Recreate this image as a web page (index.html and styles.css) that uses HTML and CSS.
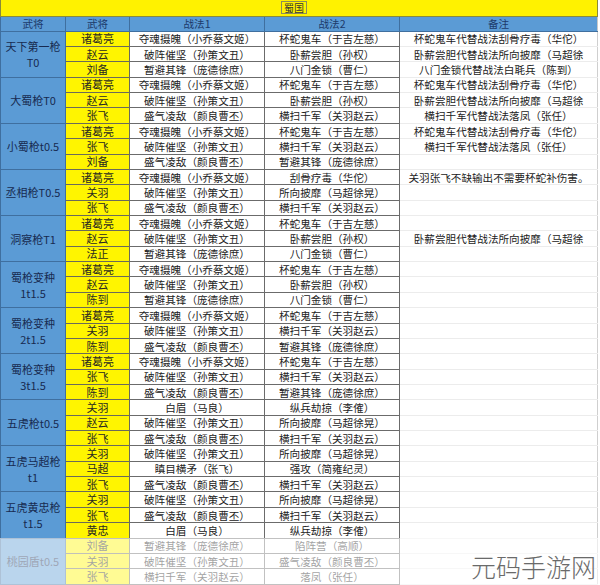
FILE: index.html
```html
<!DOCTYPE html>
<html lang="zh">
<head>
<meta charset="utf-8">
<title>蜀国</title>
<link rel="stylesheet" href="styles.css">
</head>
<body>
<div class="sheet">
<table class="grid">
<colgroup><col class="c1"><col class="c2"><col class="c3"><col class="c4"><col class="c5"></colgroup>
<tr class="title"><td colspan="5"><span class="title-box">蜀国</span></td></tr>
<tr class="head"><td>武将</td><td>武将</td><td>战法1</td><td>战法2</td><td>备注</td></tr>

<tr><td class="grp" rowspan="3">天下第一枪<br>T0</td><td class="hero">诸葛亮</td><td>夺魂摄魄（小乔蔡文姬）</td><td>杯蛇鬼车（于吉左慈）</td><td class="note">杯蛇鬼车代替战法刮骨疗毒（华佗）</td></tr>
<tr><td class="hero">赵云</td><td>破阵催坚（孙策文丑）</td><td>卧薪尝胆（孙权）</td><td class="note">卧薪尝胆代替战法所向披靡（马超徐</td></tr>
<tr><td class="hero">刘备</td><td>暂避其锋（庞德徐庶）</td><td>八门金锁（曹仁）</td><td class="note">八门金锁代替战法白毦兵（陈到）</td></tr>

<tr><td class="grp" rowspan="3">大蜀枪T0</td><td class="hero">诸葛亮</td><td>夺魂摄魄（小乔蔡文姬）</td><td>杯蛇鬼车（于吉左慈）</td><td class="note">杯蛇鬼车代替战法刮骨疗毒（华佗）</td></tr>
<tr><td class="hero">赵云</td><td>破阵催坚（孙策文丑）</td><td>卧薪尝胆（孙权）</td><td class="note">卧薪尝胆代替战法所向披靡（马超徐</td></tr>
<tr><td class="hero">张飞</td><td>盛气凌敌（颜良曹丕）</td><td>横扫千军（关羽赵云）</td><td class="note">横扫千军代替战法落凤（张任）</td></tr>

<tr><td class="grp" rowspan="3">小蜀枪t0.5</td><td class="hero">诸葛亮</td><td>夺魂摄魄（小乔蔡文姬）</td><td>杯蛇鬼车（于吉左慈）</td><td class="note">杯蛇鬼车代替战法刮骨疗毒（华佗）</td></tr>
<tr><td class="hero">张飞</td><td>破阵催坚（孙策文丑）</td><td>横扫千军（关羽赵云）</td><td class="note">横扫千军代替战法落凤（张任）</td></tr>
<tr><td class="hero">刘备</td><td>盛气凌敌（颜良曹丕）</td><td>暂避其锋（庞德徐庶）</td><td class="note"></td></tr>

<tr><td class="grp" rowspan="3">丞相枪T0.5</td><td class="hero">诸葛亮</td><td>夺魂摄魄（小乔蔡文姬）</td><td>刮骨疗毒（华佗）</td><td class="note">关羽张飞不缺输出不需要杯蛇补伤害。</td></tr>
<tr><td class="hero">关羽</td><td>破阵催坚（孙策文丑）</td><td>所向披靡（马超徐晃）</td><td class="note"></td></tr>
<tr><td class="hero">张飞</td><td>盛气凌敌（颜良曹丕）</td><td>横扫千军（关羽赵云）</td><td class="note"></td></tr>

<tr><td class="grp" rowspan="3">洞察枪T1</td><td class="hero">诸葛亮</td><td>夺魂摄魄（小乔蔡文姬）</td><td>杯蛇鬼车（于吉左慈）</td><td class="note"></td></tr>
<tr><td class="hero">赵云</td><td>破阵催坚（孙策文丑）</td><td>卧薪尝胆（孙权）</td><td class="note">卧薪尝胆代替战法所向披靡（马超徐</td></tr>
<tr><td class="hero">法正</td><td>暂避其锋（庞德徐庶）</td><td>八门金锁（曹仁）</td><td class="note"></td></tr>

<tr><td class="grp" rowspan="3">蜀枪变种<br>1t1.5</td><td class="hero">诸葛亮</td><td>夺魂摄魄（小乔蔡文姬）</td><td>杯蛇鬼车（于吉左慈）</td><td class="note"></td></tr>
<tr><td class="hero">赵云</td><td>破阵催坚（孙策文丑）</td><td>卧薪尝胆（孙权）</td><td class="note"></td></tr>
<tr><td class="hero">陈到</td><td>暂避其锋（庞德徐庶）</td><td>八门金锁（曹仁）</td><td class="note"></td></tr>

<tr><td class="grp" rowspan="3">蜀枪变种<br>2t1.5</td><td class="hero">诸葛亮</td><td>夺魂摄魄（小乔蔡文姬）</td><td>杯蛇鬼车（于吉左慈）</td><td class="note"></td></tr>
<tr><td class="hero">关羽</td><td>破阵催坚（孙策文丑）</td><td>横扫千军（关羽赵云）</td><td class="note"></td></tr>
<tr><td class="hero">陈到</td><td>盛气凌敌（颜良曹丕）</td><td>暂避其锋（庞德徐庶）</td><td class="note"></td></tr>

<tr><td class="grp" rowspan="3">蜀枪变种<br>3t1.5</td><td class="hero">诸葛亮</td><td>夺魂摄魄（小乔蔡文姬）</td><td>杯蛇鬼车（于吉左慈）</td><td class="note"></td></tr>
<tr><td class="hero">张飞</td><td>破阵催坚（孙策文丑）</td><td>横扫千军（关羽赵云）</td><td class="note"></td></tr>
<tr><td class="hero">陈到</td><td>盛气凌敌（颜良曹丕）</td><td>暂避其锋（庞德徐庶）</td><td class="note"></td></tr>

<tr><td class="grp" rowspan="3">五虎枪t0.5</td><td class="hero">关羽</td><td>白眉（马良）</td><td>纵兵劫掠（李傕）</td><td class="note"></td></tr>
<tr><td class="hero">赵云</td><td>破阵催坚（孙策文丑）</td><td>所向披靡（马超徐晃）</td><td class="note"></td></tr>
<tr><td class="hero">张飞</td><td>盛气凌敌（颜良曹丕）</td><td>横扫千军（关羽赵云）</td><td class="note"></td></tr>

<tr><td class="grp" rowspan="3">五虎马超枪<br>t1</td><td class="hero">关羽</td><td>破阵催坚（孙策文丑）</td><td>所向披靡（马超徐晃）</td><td class="note"></td></tr>
<tr><td class="hero">马超</td><td>瞋目横矛（张飞）</td><td>强攻（简雍纪灵）</td><td class="note"></td></tr>
<tr><td class="hero">张飞</td><td>盛气凌敌（颜良曹丕）</td><td>横扫千军（关羽赵云）</td><td class="note"></td></tr>

<tr><td class="grp" rowspan="3">五虎黄忠枪<br>t1.5</td><td class="hero">关羽</td><td>破阵催坚（孙策文丑）</td><td>所向披靡（马超徐晃）</td><td class="note"></td></tr>
<tr><td class="hero">张飞</td><td>盛气凌敌（颜良曹丕）</td><td>横扫千军（关羽赵云）</td><td class="note"></td></tr>
<tr><td class="hero">黄忠</td><td>白眉（马良）</td><td>纵兵劫掠（李傕）</td><td class="note"></td></tr>

<tr><td class="grp" rowspan="3">桃园盾t0.5</td><td class="hero">刘备</td><td>暂避其锋（庞德徐庶）</td><td>陷阵营（高顺）</td><td class="note"></td></tr>
<tr><td class="hero">关羽</td><td>破阵催坚（孙策文丑）</td><td>盛气凌敌（颜良曹丕）</td><td class="note"></td></tr>
<tr><td class="hero">张飞</td><td>横扫千军（关羽赵云）</td><td>落凤（张任）</td><td class="note"></td></tr>
</table>
<div class="fade"></div>
<div class="watermark">元码手游网</div>
</div>
</body>
</html>
```

FILE: styles.css
```css
html, body {
  margin: 0;
  padding: 0;
  background: #ffffff;
}
.sheet {
  position: relative;
  width: 600px;
  height: 585px;
  overflow: hidden;
  font-family: "Noto Sans CJK SC", "Noto Sans", sans-serif;
}
.grid {
  border-collapse: collapse;
  table-layout: fixed;
  width: 597px;
}
.c1 { width: 65px; }
.c2 { width: 64px; }
.c3 { width: 135px; }
.c4 { width: 135px; }
.c5 { width: 198px; }
.grid td {
  padding: 0;
  height: 14.37px;
  line-height: 13px;
  font-size: 10.6px;
  color: #222222;
  text-align: center;
  white-space: nowrap;
  overflow: hidden;
  border: 1px solid #6b6b6b;
  background: #ffffff;
}
.grid .title td {
  height: 15.7px;
  background: #fff200;
  border: 1px solid #8a8a3a;
  border-top: none;
  text-align: center;
  font-size: 10px;
  color: #333;
}
.title-box {
  display: inline-block;
  padding: 0 2px;
  line-height: 11px;
  border: 1px solid #8c8c5a;
  margin-left: -10px;
}
.grid .head td {
  height: 14px;
  background: #5b9bd5;
  color: #1d3a6a;
  border-color: #3f6f9f;
}
.grid .head td:last-child {
  border-right-color: #c8c8c8;
}
.grid td.grp {
  background: #5b9bd5;
  color: #172a50;
  font-size: 11px;
  line-height: 16px;
  border-color: #3f6f9f;
  white-space: normal;
}
.grid td.hero {
  background: #fff500;
  color: #2a2a20;
  border-color: #6b6b5a;
  font-size: 11px;
}
.grid td.note {
  border: 1px solid #ececec;
  border-left: 1px solid #6b6b6b;
  border-right-color: #cfcfcf;
}
.fade {
  position: absolute;
  left: 0;
  top: 538px;
  width: 600px;
  height: 47px;
  background: rgba(255, 255, 255, 0.58);
}
.watermark {
  position: absolute;
  left: 471px;
  top: 549px;
  font-size: 25px;
  line-height: 34px;
  font-weight: 300;
  color: #6a6a6a;
  white-space: nowrap;
}
```
